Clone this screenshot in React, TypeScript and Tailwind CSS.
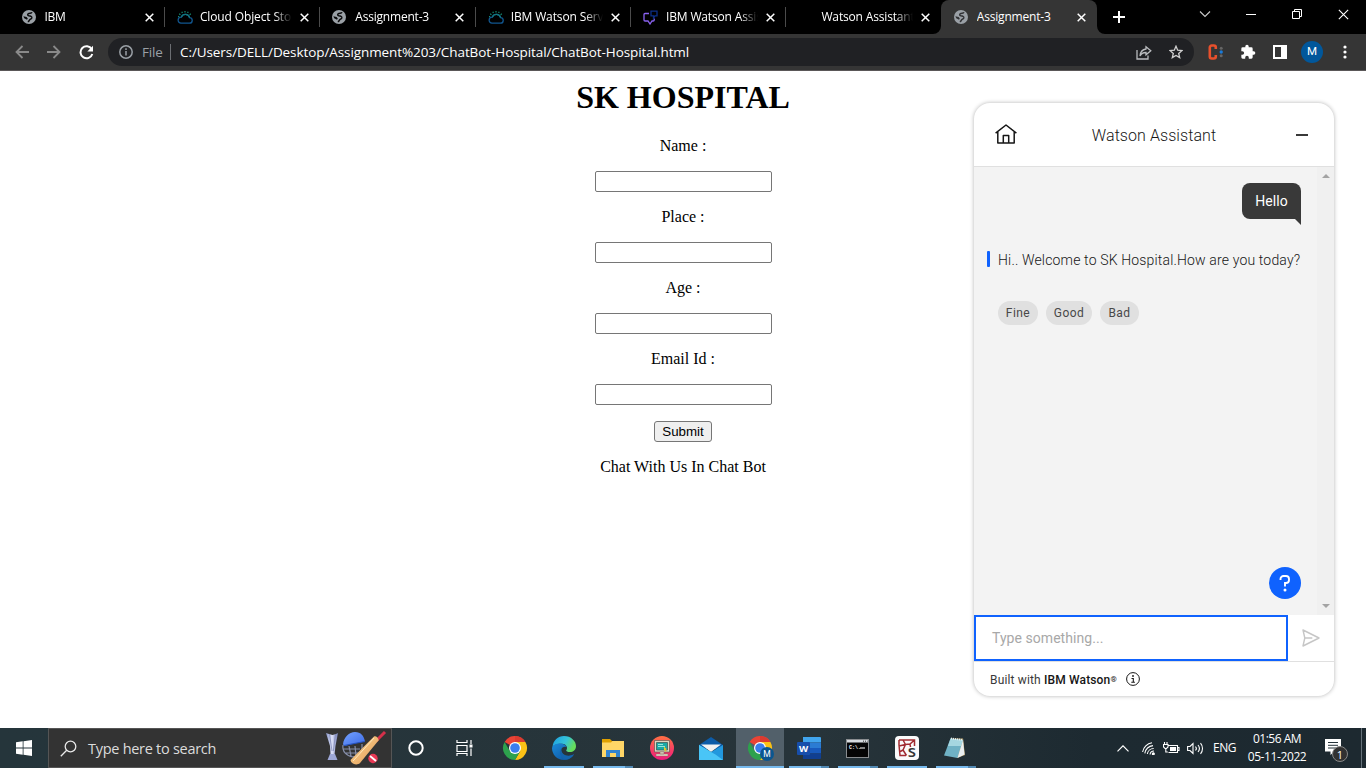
import React from "react";

const ui = "font-['Open_Sans','Noto_Sans',sans-serif]";
const plex = "font-['Roboto','Noto_Sans',sans-serif]";

function Globe({ land = "#0a0a0b" }: { land?: string }) {
  return (
    <svg width="14" height="14" viewBox="0 0 14 14">
      <circle cx="7" cy="7" r="7" fill="#9aa0a6" />
      <path d="M10 2.300C9.400 3.600 7.600 2.800 6.400 3.600 5.300 4.400 5.600 5.600 6.800 5.800c1.600.2 3.300.5 3 2.100-.3 1.300-1.800 1.100-2.300 2.200-.3.900-.9 1.500-1.700 1.700" fill="none" stroke={land} strokeWidth="1.500" />
      <path d="M1.400 6.300 4.600 7l1.200 1.600L5 9.800 2.200 8.300z" fill={land} />
    </svg>
  );
}

function CloudIcon() {
  return (
    <svg width="16" height="15" viewBox="0 0 16 15" fill="none">
      <path d="M4 13.2h8.2a2.8 2.8 0 0 0 .4-5.6A4.4 4.4 0 0 0 4.3 7.200 3 3 0 0 0 4 13.200Z" stroke="#11568f" strokeWidth="1.3" />
      <path d="M4.300 7.200A4.400 4.400 0 0 1 12.600 7.600" stroke="#12777c" strokeWidth="1.300" />
      <path d="M8 1V2.600M4.800 1.800l.6 1.300M11.200 1.800l-.6 1.300M2.200 3.800l1.200.9M13.800 3.800l-1.200.9M1 6.500h1.200" stroke="#148a6e" strokeWidth="1.200" />
    </svg>
  );
}

function AssistantIcon() {
  return (
    <svg width="15" height="15" viewBox="0 0 15 15" fill="none">
      <path d="M6 3.500H2a1 1 0 0 0-1 1V10a1 1 0 0 0 1 1h3l2 3 2-3h1.200a1 1 0 0 0 1-1V8.500" stroke="#8a62f0" strokeWidth="1.300" />
      <path d="M8 1.200h6v4.600h-2L10.500 8V5.800H8z" stroke="#0c2f86" strokeWidth="1.300" />
    </svg>
  );
}

function Close({ size = 9, w = 1.5 }: { size?: number; w?: number }) {
  return (
    <svg width={size} height={size} viewBox="0 0 9 9" stroke="#fff" strokeWidth={w}>
      <path d="M.7.7l7.600 7.600M8.300.7.7 8.300" />
    </svg>
  );
}

const tabs = [
  { title: "IBM", icon: <Globe />, track: "tracking-[-0.3px]" },
  { title: "Cloud Object Storage", icon: <CloudIcon />, track: "tracking-[-0.13px]" },
  { title: "Assignment-3", icon: <Globe />, track: "tracking-[-0.2px]" },
  { title: "IBM Watson Services", icon: <CloudIcon />, track: "tracking-[-0.13px]" },
  { title: "IBM Watson Assistant", icon: <AssistantIcon />, track: "tracking-[-0.16px]" },
  { title: "Watson Assistant L", icon: null, track: "tracking-[-0.16px]" },
];

function Tab({ title, icon, track, line, active }: { title: string; icon: React.ReactNode; track: string; line?: boolean; active?: boolean }) {
  return (
    <div className={`relative flex h-[34px] w-[155.4px] shrink-0 items-center pl-[12.500px] ${active ? "rounded-t-lg bg-[#353535]" : ""}`}>
      <div className="flex w-[23px] shrink-0 items-center">{icon}</div>
      <div className={`h-[18px] w-[92px] overflow-hidden whitespace-nowrap text-[12px] leading-[18px] text-white ${track} ${active ? "" : "[mask-image:linear-gradient(to_right,#000_74px,transparent)]"}`}>{title}</div>
      <div className="ml-[8px] flex"><Close /></div>
      {line && <div className="absolute -right-[0.500px] top-[7px] h-[20px] w-px bg-[#4b4b4b]" />}
      {active && (
        <>
          <svg className="absolute -left-2 bottom-0" width="8" height="8"><path d="M8 0v8H0a8 8 0 0 0 8-8" fill="#353535" /></svg>
          <svg className="absolute -right-2 bottom-0" width="8" height="8"><path d="M0 0v8h8a8 8 0 0 1-8-8" fill="#353535" /></svg>
        </>
      )}
    </div>
  );
}

function TabStrip() {
  return (
    <div className="flex h-[34px] bg-black pl-[9px]">
      {tabs.map((t, i) => (
        <Tab key={i} {...t} line={i < 5} />
      ))}
      <Tab title="Assignment-3" icon={<Globe land="#303134" />} track="tracking-[-0.2px]" active />
      <div className="flex flex-1 items-center pl-[16px]">
        <svg width="12" height="12" stroke="#fff" strokeWidth="2"><path d="M6 0v12M0 6h12" /></svg>
      </div>
      <div className="flex h-[28px] items-center">
        <div className="flex w-[46px] justify-center">
          <svg width="12" height="7" fill="none" stroke="#ccc" strokeWidth="1.1"><path d="M1 .5l5 5 5-5" /></svg>
        </div>
        <div className="flex w-[46px] justify-center"><div className="h-px w-[10px] bg-white" /></div>
        <div className="flex w-[46px] justify-center">
          <svg width="10" height="10" fill="none" stroke="#fff"><path d="M.5 2.500h7v7h-7zM2.500 2.500v-2h7v7h-2" /></svg>
        </div>
        <div className="flex w-[46px] justify-center"><Close size={11} w={0.9} /></div>
      </div>
    </div>
  );
}

function Toolbar() {
  return (
    <div className="flex h-[37px] items-center border-b border-[#5a5758] bg-[#353535]">
      <div className="flex w-[108px] items-center gap-[18px] pl-[15px]">
        <svg width="14" height="14" fill="none" stroke="#8a8a8a" strokeWidth="1.800"><path d="M14 7H1.500M7.500 1 1.500 7l6 6" /></svg>
        <svg width="14" height="14" fill="none" stroke="#8a8a8a" strokeWidth="1.800"><path d="M0 7h12.500M6.500 1l6 6-6 6" /></svg>
        <svg width="15" height="15" viewBox="0 0 15 15" fill="none"><path d="M12.700 4.200A6 6 0 1 0 13.300 9" stroke="#fff" strokeWidth="2" /><path d="M14 .8V6.500H8.300z" fill="#fff" /></svg>
      </div>
      <div className="flex h-7 w-[1086px] items-center rounded-full bg-[#202124] pl-[11px]">
        <svg width="14" height="14" fill="none" stroke="#9aa0a6" strokeWidth="1.500"><circle cx="7" cy="7" r="6.200" /><path d="M7 6v4.500M7 3.300v1.600" /></svg>
        <span className="ml-[9px] w-[28px] text-[13.500px] tracking-[-0.2px] text-[#9aa0a6]">File</span>
        <div className="h-[16px] w-px bg-[#6b6e72]" />
        <span className="ml-[9px] w-[900px] whitespace-nowrap text-[13.500px] tracking-[-0.085px] text-white">C:/Users/DELL/Desktop/Assignment%203/ChatBot-Hospital/ChatBot-Hospital.html</span>
        <div className="ml-[56px] flex gap-[17px]">
          <svg width="16" height="15" fill="none" stroke="#b9bbbe" strokeWidth="1.300"><path d="M1 5v9h11V10.500M10 1.800l4.800 4-4.800 4V7.500C7 7.400 5.300 8.500 4 11c.3-3.600 2.200-6.500 6-7z" /></svg>
          <svg width="14" height="14" viewBox="0 0 14 14" fill="none" stroke="#d0d0d0" strokeWidth="1.300"><path d="M7 1.200l1.700 4 4.300.4-3.300 2.800 1 4.200L7 10.400l-3.700 2.200 1-4.200L1 5.600l4.300-.4z" /></svg>
        </div>
      </div>
      <div className="flex flex-1 items-center">
        <svg className="ml-[14px]" width="16" height="16" fill="none"><path d="M7.800 5V3.500a2 2 0 0 0-2-2H3.800a2 2 0 0 0-2 2v9a2 2 0 0 0 2 2h2a2 2 0 0 0 2-2V11" stroke="#e8502c" strokeWidth="2.600" /><circle cx="13.200" cy="4.300" r="1.500" fill="#666" /><circle cx="13.200" cy="8" r="1.700" fill="#1a7ad8" /><circle cx="13.200" cy="11.800" r="1.500" fill="#666" /></svg>
        <svg className="ml-[16px]" width="16" height="16" viewBox="0 0 24 24" fill="#fff"><path d="M20.500 11H19V7a2 2 0 0 0-2-2h-4V3.500a2.500 2.500 0 0 0-5 0V5H4a2 2 0 0 0-2 2v3.800h1.500a2.700 2.700 0 0 1 0 5.400H2V20a2 2 0 0 0 2 2h3.800v-1.500a2.700 2.700 0 0 1 5.400 0V22H17a2 2 0 0 0 2-2v-4h1.500a2.500 2.500 0 0 0 0-5z" /></svg>
        <svg className="ml-[17px]" width="14" height="14"><path d="M0 0h14v14H0zM2 2v10h6V2z" fill="#fff" fillRule="evenodd" /></svg>
        <div className="ml-[14px] flex h-[22px] w-[22px] items-center justify-center rounded-full bg-[#01579b] font-[Roboto,sans-serif] text-[11.500px] text-white">M</div>
        <svg className="ml-[20px]" width="4" height="14" fill="#fff"><circle cx="2" cy="2" r="1.600" /><circle cx="2" cy="7" r="1.600" /><circle cx="2" cy="12" r="1.600" /></svg>
      </div>
    </div>
  );
}

function HospitalForm() {
  return (
    <form className="flex flex-1 flex-col items-center pt-2 font-['Liberation_Serif',serif] text-[16px] leading-[18px] text-black">
      <h1 className="mb-[21px] text-[32px] font-bold leading-[37px]">SK HOSPITAL</h1>
      {["Name :", "Place :", "Age :", "Email Id :"].map((label) => (
        <React.Fragment key={label}>
          <label className="mb-4">{label}</label>
          <input className="mb-4 h-[21px] w-[177px] rounded-[2px] border border-[#767676] bg-white px-1" />
        </React.Fragment>
      ))}
      <button type="button" className="mb-4 h-[21px] w-[58px] rounded-[3px] border border-[#767676] bg-[#efefef] font-['Liberation_Sans',sans-serif] text-[13.333px] leading-[19px]">Submit</button>
      <p>Chat With Us In Chat Bot</p>
    </form>
  );
}

function ChatWidget() {
  return (
    <section className={`absolute right-8 top-[32px] flex h-[593px] w-[360px] flex-col overflow-hidden rounded-[16px] bg-white shadow-[0_0_4px_0_rgba(0,0,0,0.3)] ${plex} text-[#161616]`}>
      <header className="flex h-[64px] shrink-0 items-center border-b border-[#e0e0e0] pl-[21px] pr-[26px]">
        <svg className="mb-px" width="22" height="20" viewBox="0 0 22 20" fill="none" stroke="#161616" strokeWidth="1.500"><path d="M.6 9.200 11 1l10.400 8.200M2.800 7.600V19h16.400V7.600M8.300 19v-7.500h5.400V19" strokeLinejoin="round" /></svg>
        <h2 className="flex-1 pr-[5px] pt-[3px] text-center text-[16px] font-light tracking-[0.07px]">Watson Assistant</h2>
        <div className="h-[2px] w-[12px] bg-[#393939]" />
      </header>
      <div className="flex h-[448px] shrink-0 bg-[#f3f3f3]">
        <div className="flex w-[343px] flex-col pl-[13px] pr-4 pt-4">
          <div className="relative flex h-9 w-[59px] items-center justify-center self-end rounded-[8px] rounded-br-none bg-[#393939] text-[14px] tracking-[0.1px] text-white">
            Hello
            <svg className="absolute -bottom-[6px] right-0" width="7" height="7"><path d="M0 0h7v7z" fill="#393939" /></svg>
          </div>
          <div className="mt-[30px] flex h-[20px] items-center">
            <div className="h-4 w-[3px] shrink-0 rounded-[1px] bg-[#0f62fe]" />
            <p className="ml-[8px] whitespace-nowrap pt-[2px] text-[14px] font-light tracking-[0.16px]">Hi.. Welcome to SK Hospital.How are you today?</p>
          </div>
          <div className="ml-[11px] mt-[32px] flex gap-2 text-[12px] tracking-[0.45px] text-[#484848]">
            <button className="h-6 w-[40px] rounded-full bg-[#e0e0e0]">Fine</button>
            <button className="h-6 w-[46px] rounded-full bg-[#e0e0e0]">Good</button>
            <button className="h-6 w-[39px] rounded-full bg-[#e0e0e0]">Bad</button>
          </div>
          <button className="mb-4 mt-auto flex h-8 w-8 items-center justify-center self-end rounded-full bg-[#0f62fe]">
            <svg width="12" height="17" viewBox="0 0 12 17" fill="none" stroke="#fff" strokeWidth="1.900"><path d="M1.500 5V4a3 3 0 0 1 3-3h2.500a3 3 0 0 1 3 3v1a3 3 0 0 1-3 3H6v3.500" /><circle cx="6" cy="15" r="1.500" fill="#fff" stroke="none" /></svg>
          </button>
        </div>
        <div className="flex w-[17px] flex-col items-center justify-between bg-[#f0f0f0] pb-[7px] pt-[7px]">
          <svg width="8" height="4"><path d="M0 4l4-4 4 4z" fill="#a3a3a3" /></svg>
          <svg width="8" height="4"><path d="M0 0l4 4 4-4z" fill="#a3a3a3" /></svg>
        </div>
      </div>
      <div className="flex h-[47px] shrink-0 border-b border-[#e0e0e0]">
        <div className="flex h-[46px] w-[314px] items-center border-2 border-[#0f62fe] pl-4 text-[14px] tracking-[0.05px] text-[#a8a8a8]">Type something...</div>
        <div className="flex flex-1 items-center justify-center">
          <svg width="18" height="18" viewBox="0 0 18 18" fill="none" stroke="#c6c6c6" strokeWidth="1.400"><path d="M1 1l16 8L1 17l1.800-8zM2.800 9h7.500" strokeLinejoin="round" /></svg>
        </div>
      </div>
      <footer className="flex flex-1 items-center pl-4 text-[12px] tracking-[0.15px]">
        <span className="w-[127px] shrink-0 whitespace-nowrap pt-px text-[#393939]">Built with <b className="font-medium text-[#161616]">IBM Watson<span className="relative -top-[2px] text-[8px]">®</span></b></span>
        <svg className="ml-[9px]" width="14" height="14" fill="none" stroke="#161616"><circle cx="7" cy="7" r="6.400" /><path d="M5.500 6.500H7.300V10M5.300 10.300h3.600" strokeWidth="1.100" /><circle cx="7" cy="4" r=".9" fill="#161616" stroke="none" /></svg>
      </footer>
    </section>
  );
}

function Chrome({ badge }: { badge?: boolean }) {
  return (
    <svg width="28" height="26" viewBox="0 0 28 26">
      <path d="M13 12 2.600 6A12 12 0 0 1 23.400 6z" fill="#ea4335" />
      <path d="M13 0a12 12 0 0 1 10.400 6H13z" fill="#db3b30" />
      <path d="M23.400 6A12 12 0 0 1 13 24l5.200-9L13 6z" fill="#fbc116" />
      <path d="M2.600 6A12 12 0 0 0 13 24l5.200-9H7.800z" fill="#2da14d" />
      <circle cx="13" cy="12" r="6" fill="#fff" /><circle cx="13" cy="12" r="4.800" fill="#3b7ded" />
      {badge && <><circle cx="20" cy="18" r="7" fill="#0b5690" /><text x="20" y="21.200" fill="#fff" fontSize="8.500" textAnchor="middle" fontFamily="Roboto">M</text></>}
    </svg>
  );
}

const Edge = () => (
  <svg width="24" height="24" viewBox="0 0 24 24">
    <defs>
      <linearGradient id="eg" x1="0" x2="1" y1="0" y2=".4"><stop stopColor="#1b9de2" /><stop offset=".6" stopColor="#35c3d9" /><stop offset="1" stopColor="#66dd5b" /></linearGradient>
      <linearGradient id="eb" x1="0" x2="1" y1="0" y2="1"><stop stopColor="#1b8ad8" /><stop offset="1" stopColor="#0c4f9c" /></linearGradient>
    </defs>
    <path d="M.5 11C1 4.500 6 0 12 0c7 0 12 5 12 10 0 4-3 6-6 6-2.500 0-4-.8-3.800-1.600C16 12.500 15 8 10 7.800 5 7.600 1.500 9.500.5 11z" fill="url(#eg)" />
    <path d="M0 12C1 8.500 5 7.500 8 7.600c3 .1 6 1.400 6.600 3.400C11 9.500 8 13 9.500 16.500c1.700 4 7.500 5 12.500 1.800C20 22 16 24 12 24 5 24 0 18.500 0 12z" fill="url(#eb)" />
    <path d="M9.300 12.500C6 16 9 23 14 23.800c3-.4 6.200-2.200 8-5.500-5 2.700-13 1.700-12.700-5.800z" fill="#1464ad" />
  </svg>
);

const Explorer = () => (
  <svg width="22" height="18" viewBox="0 0 22 18">
    <path d="M0 0h8l2 2h12v3H0z" fill="#e0a000" /><path d="M0 3.500h9L10.500 2H22v16H0z" fill="#ffd667" />
    <path d="M4 18v-7h14v7h-4v-4H8v4z" fill="#3384d1" />
  </svg>
);

const Remote = () => (
  <svg width="24" height="24" viewBox="0 0 24 24">
    <defs><linearGradient id="rg" x1="0" x2="0" y1="0" y2="1"><stop stopColor="#ff7043" /><stop offset="1" stopColor="#ee1a7c" /></linearGradient></defs>
    <circle cx="12" cy="12" r="12" fill="url(#rg)" />
    <path d="M4.500 4.500h15V16h-15z" fill="#dfd6bf" stroke="#625b55" strokeWidth=".7" /><path d="M6.500 6.500h11V14h-11z" fill="#19aaa6" stroke="#36504f" strokeWidth=".7" />
    <path d="M8 8.500h5M8 10.500h7" stroke="#95e6dc" /><path d="M10 16h4v2h-4zM6 18h12v2H6z" fill="#e8dfcb" stroke="#8a6a63" strokeWidth=".5" />
    <path d="M14 10.500l3 3h-1.300l.8 2-.9.3-.8-1.700-.8.800z" fill="#e6cd27" />
  </svg>
);

const Mail = () => (
  <svg width="24" height="23" viewBox="0 0 24 23">
    <path d="M0 8 12 0l12 8v4H0z" fill="#0d5ca8" /><path d="M2 7.500h20L12 15z" fill="#f2f2f2" />
    <path d="M0 8l12 7v8H0z" fill="#30b5f0" /><path d="M0 23 12 15 24 8v15z" fill="#2298de" /><path d="M0 8l12 7 4.500 2.600L24 23H0z" fill="#49c5f7" />
  </svg>
);

const Word = () => (
  <svg width="24" height="22" viewBox="0 0 24 22">
    <path d="M6 0h17a1 1 0 0 1 1 1v4.500H6z" fill="#41a5ee" /><path d="M6 5.500h18V11H6z" fill="#2b7cd3" /><path d="M6 11h18v5.500H6z" fill="#185abd" /><path d="M6 16.500h18V21a1 1 0 0 1-1 1H6z" fill="#103f91" />
    <rect y="5" width="13" height="13" rx="1" fill="#174eab" /><text x="6.500" y="15" fontSize="9.500" fontWeight="700" fill="#fff" textAnchor="middle" fontFamily="Open Sans">W</text>
  </svg>
);

const Cmd = () => (
  <svg className="mr-[2px]" width="23" height="19" viewBox="0 0 23 19">
    <rect x=".5" y=".5" width="22" height="18" fill="#050505" stroke="#8a8d90" /><path d="M1 1h21v2.500H1z" fill="#d8dce0" /><path d="M17 2.200h1M19 2.200h1M21 2.200h.6" stroke="#333" />
    <text x="3" y="9.500" fill="#fff" fontSize="5" fontWeight="700" fontFamily="Liberation Mono">C:\.</text><path d="M14 9h5" stroke="#fff" />
  </svg>
);

const Spyder = () => (
  <svg width="24" height="24" viewBox="0 0 24 24">
    <rect width="24" height="24" rx="4" fill="#fafafa" />
    <path d="M4 4h15.500v6M4 4v5l1 10.500h6M8 4l2.500 4.500L15 8l4.500-4M10.500 8.500 4 10M10.500 8.500 8 14l-3.500 2M8 14l3.500 5.500M15 8l.5 3" fill="none" stroke="#a12b30" strokeWidth="1.500" />
    <text x="17" y="20.500" fontSize="17" fontWeight="600" fill="#343434" stroke="#fafafa" strokeWidth="1.500" paintOrder="stroke" textAnchor="middle" fontFamily="Open Sans">s</text>
  </svg>
);

const Notepad = () => (
  <svg className="mr-[3px]" width="23" height="22" viewBox="0 0 23 22">
    <path d="M8 1.500h12L22 18l-8 3z" fill="#b9a06c" /><path d="M7.500 1.500 20 3l-5.500 18L1 18.500z" fill="#6fb1c4" /><path d="M7.500 1.500 20 3l-2 6L5 9z" fill="#a5d6e0" /><path d="M20 3l1.500 14.500-7 3.500z" fill="#e9eef0" />
    <path d="M8 1.500 20 3" stroke="#e9f1f3" strokeWidth="1.800" strokeDasharray="1 1" />
  </svg>
);

const apps = [
  { icon: <Chrome />, run: 0 },
  { icon: <Edge />, run: 1 },
  { icon: <Explorer />, run: 2 },
  { icon: <Remote />, run: 0 },
  { icon: <Mail />, run: 0 },
  { icon: <Chrome badge />, run: 3 },
  { icon: <Word />, run: 2 },
  { icon: <Cmd />, run: 2 },
  { icon: <Spyder />, run: 1 },
  { icon: <Notepad />, run: 2 },
];

function Cricket() {
  return (
    <svg width="62" height="36" viewBox="0 0 62 36">
      <defs>
        <linearGradient id="tr" x1="0" x2="1"><stop stopColor="#8794c5" /><stop offset=".5" stopColor="#dfe3fa" /><stop offset="1" stopColor="#707bb2" /></linearGradient>
        <linearGradient id="bt" x1="0" x2="1" y1="0" y2="1"><stop stopColor="#ffd795" /><stop offset="1" stopColor="#e09a55" /></linearGradient>
        <linearGradient id="hm" x1="0" x2="1" y1="0" y2="1"><stop stopColor="#75a2ff" /><stop offset="1" stopColor="#3a69e6" /></linearGradient>
      </defs>
      <path d="M1 3l3 1 3.500 1L11 4l2-1-2.500 13-1 9H5.500L5 16z" fill="url(#tr)" /><path d="M4.500 4 7 21M10.500 4 8.300 21" stroke="#7680b0" strokeWidth=".7" /><path d="M5 24h5l2.500 6h-10z" fill="#9ea8d7" />
      <path d="M18 15c-1 6 3 11 10 12l9-4V14M18 19h17M20 23h14M24 16l2 10M30 16l1 10" fill="none" stroke="#858da8" strokeWidth="1.200" />
      <path d="M18 14C19 7 24 2 30 2c6 0 9 4 10 9.500l-8 1.500-13 3z" fill="url(#hm)" /><path d="M19 15.500l13-2.500 8-1.500" stroke="#2450bd" strokeWidth="1.200" fill="none" />
      <path d="M51 11 60 2" stroke="#d6304a" strokeWidth="3" /><path d="M49 6.500c2-1 5 2 4.500 4L35 33c-3 3-9 1-9.500-3z" fill="url(#bt)" /><path d="M49 8 28 31" stroke="#ffe9bb" />
      <circle cx="48" cy="28.500" r="4.700" fill="#e93854" /><path d="M45 26l6 5" stroke="#fff" strokeWidth="1.800" />
    </svg>
  );
}

function Taskbar() {
  return (
    <footer className="flex h-10 shrink-0 bg-[linear-gradient(to_right,#25353b,#27343a_60%,#1d2a31_80%,#1d2930)] text-white">
      <div className="flex w-12 items-center justify-center">
        <svg width="16" height="16" fill="#fff"><path d="M0 2.200 6.700 1.300v6.300H0zM7.500 1.200 16 0v7.600H7.500zM0 8.400h6.700v6.300L0 13.800zM7.500 8.400H16V16l-8.500-1.200z" /></svg>
      </div>
      <div className="flex w-[344px] items-center border border-[#555] bg-[#333] pl-[11px]">
        <svg width="17" height="17" fill="none" stroke="#e8e8e8" strokeWidth="1.300"><circle cx="10.500" cy="6.500" r="5.300" /><path d="M6.700 10.300.8 16.300" /></svg>
        <span className="ml-[11px] flex-1 pt-px text-[14.500px] tracking-[-0.28px] text-[#dcdcdc]">Type here to search</span>
        <div className="mr-[4px]"><Cricket /></div>
      </div>
      <div className="flex w-12 items-center justify-center">
        <svg width="16" height="16"><circle cx="8" cy="8" r="6.700" fill="none" stroke="#fff" strokeWidth="2" /></svg>
      </div>
      <div className="mr-[3px] flex w-12 items-center justify-center">
        <svg width="17" height="16" fill="none" stroke="#fff" strokeWidth="1.200"><path d="M1 0v2.500h10V0M1 5.500h10v6H1zM1 16v-2.500h10V16M15 0v4M15 8.500V16" /><path d="M13.500 4.500h3v3h-3z" fill="#fff" stroke="none" /></svg>
      </div>
      <div className="flex gap-px">
        {apps.map((a, i) => (
          <div key={i} className={`flex h-10 w-12 flex-col items-center ${a.run === 3 ? "bg-[#52606a]" : ""}`}>
            <div className={`flex h-[38px] items-center justify-center ${i === 0 || i === 5 ? "pl-[2px] pt-[4px]" : "pt-[2px]"}`}>{a.icon}</div>
            {a.run === 1 && <div className="h-[2px] w-10 bg-[#76b9ed]" />}
            {a.run === 2 && <div className="flex h-[2px] w-10"><div className="w-8 bg-[#76b9ed]" /><div className="w-2 bg-[#5289b3]" /></div>}
            {a.run === 3 && <div className="h-[2px] w-12 bg-[#76b9ed]" />}
          </div>
        ))}
      </div>
      <div className="ml-auto flex items-center">
        <svg width="12" height="7" fill="none" stroke="#fff" strokeWidth="1.200"><path d="M.5 6.300 6 .8l5.500 5.500" /></svg>
        <svg className="ml-[13px]" width="13" height="13" fill="none" stroke="#fff" strokeWidth="1.100"><path d="M.6 10A11 11 0 0 1 10 .8M2.800 11.300A9 9 0 0 1 11 3.600M5.300 12A6.500 6.500 0 0 1 11.700 6.500M8 12.500a4 4 0 0 1 4-3.500" /><circle cx="11.300" cy="11.800" r="1" fill="#fff" /></svg>
        <svg className="ml-[8px]" width="17" height="12" fill="none" stroke="#fff" strokeWidth="1.100"><path d="M5.500 3.500h9v7h-9M14.500 5.500H16v3h-1.500M1.500 0v2.500M4 0v2.500M.5 2.500H5V5L3.500 6.500h-1.500L.5 5zM2.800 6.500V10h2" /><path d="M7 5h6v4H7z" fill="#fff" stroke="none" /></svg>
        <svg className="ml-[7px]" width="17" height="13" fill="none" stroke="#fff" strokeWidth="1.100"><path d="M.6 4.500H3L6 1.500v10l-3-3H.6zM8.500 4.500a3 3 0 0 1 0 4M11 3a5.500 5.500 0 0 1 0 7M13.500 1.200a8 8 0 0 1 0 10.600" /></svg>
        <span className="ml-[9px] w-[25px] whitespace-nowrap text-[12px] tracking-[-0.5px]">ENG</span>
        <div className="ml-[8px] w-[62px] whitespace-nowrap text-center text-[12px] leading-[18px]">
          <div className="tracking-[-0.5px]">01:56 AM</div>
          <div className="tracking-[-0.4px]">05-11-2022</div>
        </div>
        <div className="relative ml-[17px] h-[18px] w-[24px]">
          <svg width="16" height="16"><path d="M0 0h16v12.500H9L5.500 16v-3.500H0z" fill="#fff" /><path d="M3 3.500h10M3 6.300h10M3 9h10" stroke="#26343b" /></svg>
          <div className="absolute left-[7px] top-[7px] flex h-4 w-4 items-center justify-center rounded-full border border-[#888] bg-[#313131] text-[11px] leading-none">1</div>
        </div>
        <div className="ml-[12px] mr-[4px] h-10 w-px bg-[#66727a]" />
      </div>
    </footer>
  );
}

export default function App() {
  return (
    <div className={`flex h-[768px] w-[1366px] flex-col overflow-hidden bg-white ${ui}`}>
      <TabStrip />
      <Toolbar />
      <main className="relative flex min-h-0 flex-1">
        <HospitalForm />
        <ChatWidget />
      </main>
      <Taskbar />
    </div>
  );
}
